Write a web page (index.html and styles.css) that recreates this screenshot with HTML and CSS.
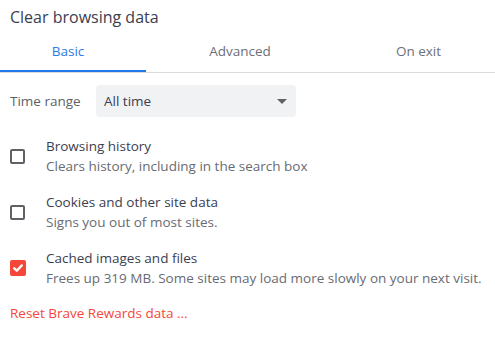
FILE: index.html
```html
<!DOCTYPE html>
<html>
<head>
<meta charset="utf-8">
<link rel="stylesheet" href="styles.css">
</head>
<body>
<div class="dialog">
  <div class="title">Clear browsing data</div>
  <div class="tabs">
    <div class="tab tab-basic active">Basic</div>
    <div class="tab tab-adv">Advanced</div>
    <div class="tab tab-exit">On exit</div>
  </div>
  <div class="range-row">
    <div class="range-label">Time range</div>
    <div class="select">
      <span>All time</span>
      <span class="arrow"></span>
    </div>
  </div>
  <div class="options">
    <div class="option">
      <div class="box"></div>
      <div class="texts">
        <div class="opt-title">Browsing history</div>
        <div class="opt-desc">Clears history, including in the search box</div>
      </div>
    </div>
    <div class="option">
      <div class="box"></div>
      <div class="texts">
        <div class="opt-title">Cookies and other site data</div>
        <div class="opt-desc">Signs you out of most sites.</div>
      </div>
    </div>
    <div class="option">
      <div class="box checked">
        <svg width="12" height="12" viewBox="0 0 12 12"><path d="M2.2 6.3 L4.8 8.7 L9.8 3.4" fill="none" stroke="#fff" stroke-width="2.3" stroke-linecap="round" stroke-linejoin="round"/></svg>
      </div>
      <div class="texts">
        <div class="opt-title">Cached images and files</div>
        <div class="opt-desc">Frees up 319 MB. Some sites may load more slowly on your next visit.</div>
      </div>
    </div>
  </div>
  <div class="reset">Reset Brave Rewards data ...</div>
</div>
</body>
</html>
```
FILE: styles.css
```css
html, body {
  margin: 0;
  padding: 0;
  background: #ffffff;
}
body {
  font-family: "Open Sans", "DejaVu Sans", sans-serif;
  font-size: 13.5px;
  color: #3b3e4f;
}
.dialog {
  width: 495px;
}
.title {
  height: 34px;
  line-height: 34px;
  padding-left: 10px;
  font-size: 16px;
  color: #3b3e4f;
}
.tabs {
  display: grid;
  grid-template-columns: 146px 188px 1fr;
  border-bottom: 1px solid #dcdcdc;
}
.tab {
  text-align: center;
  line-height: 34px;
  padding-bottom: 2px;
  border-bottom: 2px solid transparent;
  font-size: 13.5px;
  color: #6c6f78;
}
.tab.active {
  color: #2c7be5;
  border-bottom-color: #2178e8;
}
.tab-basic {
  padding-right: 10px;
}
.tab-exit {
  padding-left: 8px;
}
.range-row {
  display: flex;
  align-items: center;
  margin-top: 12px;
  padding-left: 10px;
}
.range-label {
  width: 86px;
  color: #5c5f68;
}
.select {
  width: 200px;
  height: 32px;
  box-sizing: border-box;
  background: #f1f2f4;
  border-radius: 4px;
  display: flex;
  align-items: center;
  justify-content: space-between;
  padding: 0 9px 0 8px;
  color: #3b3e4f;
}
.arrow {
  width: 0;
  height: 0;
  border-left: 5px solid transparent;
  border-right: 5px solid transparent;
  border-top: 5px solid #5f6368;
}
.options {
  margin-top: 19px;
  display: flex;
  flex-direction: column;
  gap: 16px;
  padding-left: 10px;
}
.option {
  display: flex;
  align-items: center;
}
.box {
  width: 15px;
  height: 15px;
  box-sizing: border-box;
  border: 2px solid #5f6166;
  border-radius: 2px;
  margin-right: 21px;
  flex: none;
}
.box.checked {
  width: 16px;
  height: 16px;
  border: none;
  background: #f4473a;
  display: flex;
  align-items: center;
  justify-content: center;
  margin-right: 20px;
}
.box.checked svg {
  display: block;
}
.texts {
  line-height: 20px;
}
.opt-title {
  color: #3b3e4f;
}
.opt-desc {
  color: #686b73;
}
.reset {
  margin-top: 15px;
  padding-left: 10px;
  line-height: 20px;
  color: #f4473a;
}
```
